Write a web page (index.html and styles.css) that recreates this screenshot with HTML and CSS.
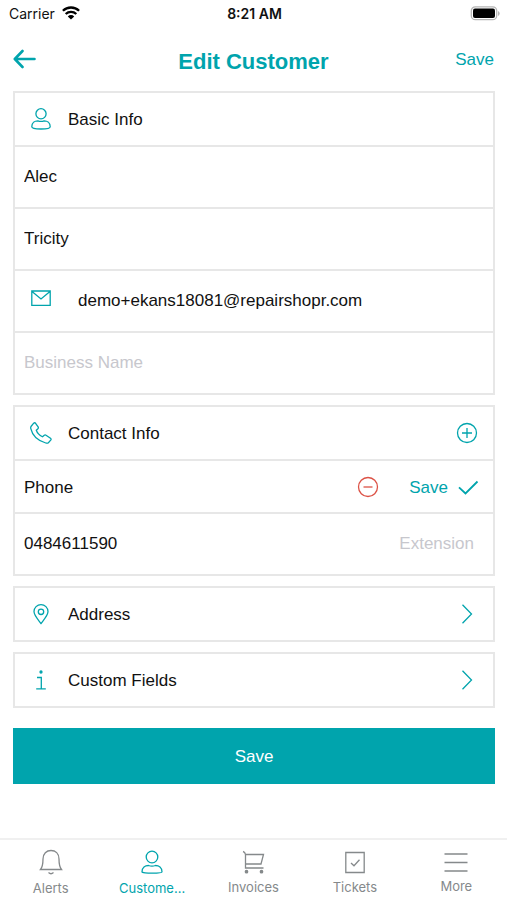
FILE: index.html
```html
<!DOCTYPE html>
<html lang="en">
<head>
<meta charset="utf-8">
<meta name="viewport" content="width=device-width, initial-scale=1">
<title>Edit Customer</title>
<link rel="stylesheet" href="styles.css">
</head>
<body>
<div class="status">
  <div class="status-left">
    <span>Carrier</span>
    <svg class="wifi" width="18" height="14" viewBox="0 0 18 14" aria-hidden="true"><path d="M.9 4.800a11.600 11.600 0 0 1 16.200 0M3.700 8a7.600 7.600 0 0 1 10.600 0" fill="none" stroke="#000" stroke-width="2.300"/><path d="M5.800 10.400a4.600 4.600 0 0 1 6.400 0L9 13.600z"/></svg>
  </div>
  <time class="clock">8:21 AM</time>
  <div class="status-right">
    <svg width="31" height="15" viewBox="0 0 31 15" aria-hidden="true"><rect x="2.300" y=".8" width="25.400" height="12.900" rx="4" fill="#fff" stroke="#b5b5b5" stroke-width="1.300"/><rect x="4" y="2.500" width="22" height="9.500" rx="2"/><path d="M29 5v5q1.700-.8 1.700-2.500T29 5z" fill="#b5b5b5"/></svg>
  </div>
</div>
<header class="nav">
  <button class="plain back" type="button" aria-label="Back"><svg width="23" height="20" viewBox="0 0 23 20"><path d="M21.500 10H2M9.500 2L1.800 10l7.700 8" fill="none" stroke="currentColor" stroke-width="2.600" stroke-linecap="round" stroke-linejoin="round"/></svg></button>
  <h1>Edit Customer</h1>
  <button class="plain nav-save" type="button">Save</button>
</header>
<main>
  <form class="form">
    <section class="card">
      <div class="row head">
        <svg class="icon" viewBox="0 0 22 22" aria-hidden="true"><circle cx="11" cy="5.800" r="5.100"/><path d="M1.800 18.800c0-4 3-6 6-6q3.200 1.300 6.400 0c3 0 6 2 6 6 0 1.400-2.500 2.200-9.200 2.200s-9.200-.8-9.200-2.200z"/></svg>
        <h2>Basic Info</h2>
      </div>
      <div class="row field"><input type="text" aria-label="First name" value="Alec"></div>
      <div class="row field"><input type="text" aria-label="Last name" value="Tricity"></div>
      <div class="row field email">
        <label for="email" aria-label="Email"><svg class="icon" viewBox="0 0 22 22"><path d="M1.800 1h18.400v14.400H1.800zM2 1.400l9 7.600 9-7.600"/></svg></label>
        <input id="email" type="email" value="demo+ekans18081@repairshopr.com">
      </div>
      <div class="row field"><input type="text" aria-label="Business Name" placeholder="Business Name"></div>
    </section>

    <section class="card">
      <div class="row head">
        <svg class="icon" viewBox="0 0 22 22" aria-hidden="true"><path d="M1 4.500L3.700 1.200q1-.9 1.900.1l2.500 3.600q.6 1-.2 1.800L6.300 8.200q1.300 4 6.200 6.600l1.800-1.600q.8-.6 1.700 0l4.500 3.100q1 .8.2 1.800l-2.300 2.600q-1 .8-2.600.3C7.500 18.600 2.400 13.500.8 6.600Q.500 5.300 1 4.500z"/></svg>
        <h2>Contact Info</h2>
        <button class="plain" type="button" aria-label="Add phone"><svg class="icon" viewBox="0 0 22 22"><circle cx="11" cy="11" r="9.500"/><path d="M11 6v10M6 11h10"/></svg></button>
      </div>
      <div class="row phone">
        <h3>Phone</h3>
        <button class="plain remove" type="button" aria-label="Remove phone"><svg class="icon" viewBox="0 0 22 22"><circle cx="11" cy="11" r="9.500"/><path d="M6.500 11h9"/></svg></button>
        <button class="plain confirm" type="button"><span>Save</span> <svg class="icon" viewBox="0 0 22 22"><path d="M2 11.300l6.500 6.200L20.500 5.500" stroke-width="1.800"/></svg></button>
      </div>
      <div class="row field number">
        <input type="tel" aria-label="Phone number" value="0484611590">
        <input class="extension" type="text" aria-label="Extension" placeholder="Extension">
      </div>
    </section>

    <button class="card link" type="button">
      <svg class="icon" viewBox="0 0 22 22" aria-hidden="true"><path d="M11 20.500C8 16.500 4 12.500 4 8.600a7 7 0 0 1 14 0c0 3.900-4 7.900-7 11.900z"/><circle cx="11" cy="8.800" r="2.700"/></svg>
      <span>Address</span>
      <svg class="icon" viewBox="0 0 22 22" aria-hidden="true"><path d="M6.500 1.800L15.500 11l-9 9.200"/></svg>
    </button>
    <button class="card link" type="button">
      <svg class="icon" viewBox="0 0 22 22" aria-hidden="true"><path d="M7 8.500h4.300v11M6.200 19.800h9.600"/><circle cx="11" cy="3" r="1" fill="currentColor"/></svg>
      <span>Custom Fields</span>
      <svg class="icon" viewBox="0 0 22 22" aria-hidden="true"><path d="M6.500 1.800L15.500 11l-9 9.200"/></svg>
    </button>
    <button class="submit" type="button">Save</button>
  </form>
</main>
<nav class="tabs">
  <a href="#alerts"><svg width="26" height="28" viewBox="0 0 26 28"><path d="M2.500 21.500c2-2.500 2.500-4.500 2.500-10.500C5 5.500 8.500 2.500 13 2.500S21 5.500 21 11c0 6 .5 8 2.500 10.500zM10.500 24.500q2.500 2.500 5 0"/></svg>Alerts</a>
  <a class="active" href="#customers" aria-current="page"><svg width="26" height="28" viewBox="0 0 26 28"><circle cx="13" cy="9" r="5.800"/><path d="M3 24c0-4.500 3.200-6.500 6.500-6.500q3.500 1.300 7 0c3.300 0 6.500 2 6.500 6.500 0 1.500-20 1.500-20 0z"/></svg>Custome...</a>
  <a href="#invoices"><svg width="26" height="27" viewBox="0 0 26 27"><path d="M3 3.500q2 .5 2.500 3h18l-2.500 9.500H5.500M5.500 6.500v13.500h18"/><circle cx="6.500" cy="23.700" r="1.200" fill="currentColor"/><circle cx="21.500" cy="23.700" r="1.200" fill="currentColor"/></svg>Invoices</a>
  <a href="#tickets"><svg width="26" height="27" viewBox="0 0 26 27"><path d="M3.800 4.500h18.400v20H3.800zM9 15l3 2.800 5.500-6"/></svg>Tickets</a>
  <a href="#more"><svg width="26" height="26" viewBox="0 0 26 26"><path d="M1.500 6h23M1.500 14.500h23M1.500 23h23"/></svg>More</a>
</nav>
</body>
</html>
```
FILE: styles.css
```css
:root {
  --teal: #00a4ad;
  --line: #e7e7e7;
}

* { box-sizing: border-box; }

body {
  margin: 0;
  min-height: 100vh;
  display: flex;
  flex-direction: column;
  background: #fff;
  color: #111;
  font: 17px/20px "Liberation Sans", Arial, sans-serif;
}

h1, h2, h3 { margin: 0; font-weight: 400; font-size: 17px; }

button, input { font: inherit; color: inherit; }

.plain {
  display: flex;
  align-items: center;
  padding: 0;
  border: 0;
  background: none;
  color: var(--teal);
}

.icon {
  display: block;
  flex: none;
  width: 22px;
  height: 22px;
  fill: none;
  stroke: currentColor;
  stroke-width: 1.3;
  color: var(--teal);
}

/* Status bar */
.status {
  display: grid;
  grid-template-columns: 1fr auto 1fr;
  align-items: center;
  height: 27px;
  padding: 0 7px 0 9px;
  font: 14px/18px Inter, sans-serif;
}
.status-left { display: flex; align-items: center; gap: 7px; }
.wifi { margin-bottom: 2px; }
.clock { font-weight: 600; }
.status-right { display: flex; justify-content: flex-end; }

/* Title bar */
.nav {
  display: grid;
  grid-template-columns: 1fr auto 1fr;
  align-items: center;
  height: 64px;
  padding: 0 13px;
}
.nav h1 { color: var(--teal); font-size: 22px; font-weight: 700; line-height: 28px; padding-top: 6px; }
.nav-save { justify-self: end; padding-top: 2px; }

/* Form */
.form {
  display: flex;
  flex-direction: column;
  gap: 10px;
  padding: 0 12px 20px 13px;
}
.card { border: 2px solid var(--line); border-bottom: 0; background: #fff; }
.row { display: flex; align-items: center; border-bottom: 2px solid var(--line); }
.head { height: 54px; padding: 0 15px; gap: 16px; }
.head h2, .phone h3, .confirm span, .link span { padding-top: 2px; }
.head h2, .phone h3, .link span { flex: 1; }
.field { height: 62px; padding: 0 19px 0 9px; }
.field input {
  flex: 1;
  min-width: 0;
  padding: 0;
  border: 0;
  outline: 0;
  background: none;
}
.field input::placeholder { color: #c7c7cd; opacity: 1; }
.email { gap: 26px; padding-left: 15px; }
.phone { height: 53px; padding: 0 14px 0 9px; }
.remove, .remove .icon { color: #dc5246; }
.confirm { margin-left: 30px; gap: 9px; }
.number .extension { flex: 0 1 100px; text-align: right; }
.link {
  display: flex;
  align-items: center;
  gap: 16px;
  height: 56px;
  padding: 0 15px;
  border-bottom: 2px solid var(--line);
  text-align: left;
}
.submit {
  height: 56px;
  margin-top: 10px;
  padding: 2px 0 0;
  border: 0;
  background: var(--teal);
  color: #fff;
}

/* Tab bar */
.tabs {
  display: grid;
  grid-template-columns: repeat(5, 1fr);
  height: 62px;
  margin-top: auto;
  padding-top: 8px;
  border-top: 2px solid #f0f0f0;
}
.tabs a {
  display: flex;
  flex-direction: column;
  align-items: center;
  gap: 4px;
  color: #85898b;
  font: 13px/16px Inter, sans-serif;
  text-decoration: none;
}
.tabs a.active { color: var(--teal); }
.tabs svg { fill: none; stroke: currentColor; stroke-width: 1.3; }
```
